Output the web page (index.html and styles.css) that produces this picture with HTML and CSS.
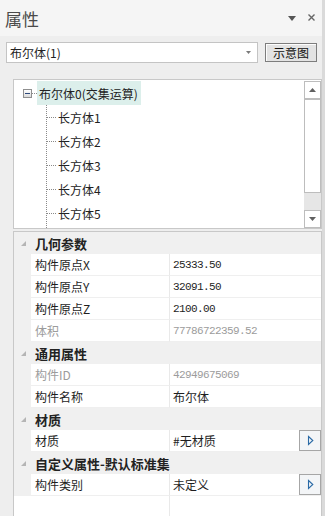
FILE: index.html
```html
<!DOCTYPE html>
<html lang="zh">
<head>
<meta charset="utf-8">
<title>属性</title>
<link rel="stylesheet" href="styles.css">
</head>
<body>
<div class="main">
  <div class="titlebar">
    <span class="title">属性</span>
    <span class="tb-icons">
      <svg class="ico-chev" width="8" height="5" viewBox="0 0 8 5"><polygon points="0,0 8,0 4,5" fill="#555"/></svg>
      <svg class="ico-close" width="7" height="7" viewBox="0 0 7 7"><path d="M0.5 0.5 L6.5 6.5 M6.5 0.5 L0.5 6.5" stroke="#666" stroke-width="1.4" fill="none"/></svg>
    </span>
  </div>
  <div class="toolbar">
    <div class="combo">
      <span>布尔体(1)</span>
      <svg width="5" height="3" viewBox="0 0 5 3"><polygon points="0,0 5,0 2.5,3" fill="#7a7a7a"/></svg>
    </div>
    <button class="btn">示意图</button>
  </div>
  <div class="tree">
    <div class="tree-body">
      <div class="root">
        <span class="exp"></span>
        <span class="hdots"></span>
        <span class="label">布尔体0(交集运算)</span>
      </div>
      <div class="children">
        <div class="child"><span class="hdots"></span><span class="label">长方体1</span></div>
        <div class="child"><span class="hdots"></span><span class="label">长方体2</span></div>
        <div class="child"><span class="hdots"></span><span class="label">长方体3</span></div>
        <div class="child"><span class="hdots"></span><span class="label">长方体4</span></div>
        <div class="child"><span class="hdots"></span><span class="label">长方体5</span></div>
      </div>
    </div>
    <div class="vscroll">
      <div class="sb-btn"><svg width="7" height="4" viewBox="0 0 7 4"><polygon points="0,4 7,4 3.5,0" fill="#606060"/></svg></div>
      <div class="sb-thumb"></div>
      <div class="sb-track"></div>
      <div class="sb-btn"><svg width="7" height="4" viewBox="0 0 7 4"><polygon points="0,0 7,0 3.5,4" fill="#606060"/></svg></div>
    </div>
  </div>
  <div class="grid">
    <div class="cat"><span class="tri"></span>几何参数</div>
    <div class="row"><div class="strip"></div><div class="name">构件原点X</div><div class="val num">25333.50</div></div>
    <div class="row"><div class="strip"></div><div class="name">构件原点Y</div><div class="val num">32091.50</div></div>
    <div class="row"><div class="strip"></div><div class="name">构件原点Z</div><div class="val num">2100.00</div></div>
    <div class="row ro"><div class="strip"></div><div class="name">体积</div><div class="val num">77786722359.52</div></div>
    <div class="cat"><span class="tri"></span>通用属性</div>
    <div class="row ro"><div class="strip"></div><div class="name">构件ID</div><div class="val num">42949675069</div></div>
    <div class="row"><div class="strip"></div><div class="name">构件名称</div><div class="val">布尔体</div></div>
    <div class="cat"><span class="tri"></span>材质</div>
    <div class="row"><div class="strip"></div><div class="name">材质</div><div class="val"><span>#无材质</span><span class="pick"><svg width="7" height="11" viewBox="0 0 7 11"><polygon points="1.5,1.5 5.8,5.5 1.5,9.5" fill="none" stroke="#2a6aa6" stroke-width="1.1"/></svg></span></div></div>
    <div class="cat"><span class="tri"></span>自定义属性-默认标准集</div>
    <div class="row"><div class="strip"></div><div class="name">构件类别</div><div class="val"><span>未定义</span><span class="pick"><svg width="7" height="11" viewBox="0 0 7 11"><polygon points="1.5,1.5 5.8,5.5 1.5,9.5" fill="none" stroke="#2a6aa6" stroke-width="1.1"/></svg></span></div></div>
    <div class="filler"><div class="filler-l"></div></div>
  </div>
</div>
<div class="gutter"></div>
</body>
</html>
```
FILE: styles.css
```css
* { box-sizing: border-box; }
html, body { margin: 0; padding: 0; }
body {
  width: 332px;
  height: 516px;
  overflow: hidden;
  display: flex;
  background: #ffffff;
  font-family: "Noto Sans CJK SC", "Noto Sans", sans-serif;
  font-size: 12px;
  color: #1e1e1e;
}
.main {
  width: 322px;
  display: flex;
  flex-direction: column;
  background: #eeeeee;
}
.gutter {
  width: 3px;
  background: #dadada;
}
.titlebar {
  height: 36px;
  flex: none;
  background: #f5f5f5;
  display: flex;
  align-items: center;
  padding: 0 7px 0 5px;
}
.title {
  flex: 1;
  font-size: 17px;
  line-height: 1;
  color: #4a4a4a;
}
.tb-icons {
  display: flex;
  align-items: center;
  gap: 12px;
}
.ico-close { margin-top: -1px; }
.toolbar {
  height: 43px;
  flex: none;
  display: flex;
  align-items: flex-start;
  padding-left: 6px;
}
.combo {
  margin-top: 6px;
  width: 252px;
  height: 21px;
  border: 1px solid #c4c4c4;
  background: #fff;
  display: flex;
  align-items: center;
  justify-content: space-between;
  padding: 0 6px 0 3px;
  line-height: 1;
  color: #222;
}
.btn {
  margin-top: 7px;
  margin-left: 7px;
  width: 52px;
  height: 19px;
  padding: 0;
  font-family: inherit;
  font-size: 12px;
  line-height: 1;
  color: #111;
  border: 1px solid #7d7d7d;
  background: #e3e3e3;
  box-shadow: inset 1px 1px 0 #fdfdfd;
}
.tree {
  margin-left: 13px;
  width: 309px;
  height: 150px;
  flex: none;
  border: 1px solid #c8c8c8;
  background: #fff;
  display: flex;
}
.tree-body {
  flex: 1;
  display: flex;
  flex-direction: column;
  padding-top: 1px;
  overflow: hidden;
}
.root {
  height: 24px;
  flex: none;
  display: flex;
  align-items: center;
  padding-left: 9px;
}
.exp {
  width: 9px;
  height: 9px;
  border: 1px solid #8f8f8f;
  background: linear-gradient(#ffffff, #dadada);
  display: flex;
  align-items: center;
  justify-content: center;
}
.exp::before {
  content: "";
  width: 5px;
  height: 1px;
  background: #2f4a7c;
}
.root .hdots {
  width: 5px;
  border-top: 1px dotted #8a8a8a;
}
.root .label {
  height: 24px;
  display: flex;
  align-items: center;
  padding: 0 3px 0 2px;
  background: #dcefeb;
  color: #222;
}
.children {
  flex: 1;
  margin-left: 32px;
  border-left: 1px dotted #8a8a8a;
}
.child {
  height: 24px;
  display: flex;
  align-items: center;
  color: #222;
}
.child .hdots {
  width: 9px;
  border-top: 1px dotted #8a8a8a;
}
.child .label { margin-left: 2px; }
.vscroll {
  width: 17px;
  display: flex;
  flex-direction: column;
  padding-top: 1px;
}
.sb-btn {
  height: 18px;
  flex: none;
  border: 1px solid #bdbdbd;
  background: #fff;
  display: flex;
  align-items: center;
  justify-content: center;
}
.sb-thumb {
  height: 94px;
  flex: none;
  border: 1px solid #bdbdbd;
  background: #fff;
}
.sb-track {
  flex: 1;
  background: #e6e6e6;
}
.grid {
  margin-left: 13px;
  margin-top: 2px;
  width: 309px;
  flex: 1;
  min-height: 0;
  border: 1px solid #c8c8c8;
  border-bottom: none;
  background: #fff;
  display: flex;
  flex-direction: column;
}
.cat {
  height: 22px;
  flex: none;
  background: #f0f0f0;
  display: flex;
  align-items: center;
  font-weight: bold;
  font-size: 13px;
  color: #222;
}
.tri {
  width: 0;
  height: 0;
  border-left: 5px solid transparent;
  border-bottom: 5px solid #b5b5b5;
  margin-left: 7px;
  margin-right: 9px;
}
.row {
  height: 22px;
  flex: none;
  display: flex;
}
.strip {
  width: 17px;
  background: #f0f0f0;
}
.name {
  width: 139px;
  border-right: 1px solid #e9e9e9;
  border-bottom: 1px solid #efefef;
  padding-left: 4px;
  display: flex;
  align-items: center;
}
.val {
  flex: 1;
  border-bottom: 1px solid #efefef;
  padding-left: 3px;
  display: flex;
  align-items: center;
  justify-content: space-between;
}
.num {
  font-family: "Liberation Mono", "DejaVu Sans Mono", monospace;
  font-size: 11px;
  letter-spacing: -0.6px;
}
.ro { color: #9c9c9c; }
.pick {
  width: 22px;
  height: 21px;
  border: 1px solid #a6a6a6;
  background: #f3f5f7;
  display: flex;
  align-items: center;
  justify-content: center;
}
.filler {
  flex: 1;
  display: flex;
}
.filler-l {
  width: 156px;
  border-right: 1px solid #e9e9e9;
}
```
